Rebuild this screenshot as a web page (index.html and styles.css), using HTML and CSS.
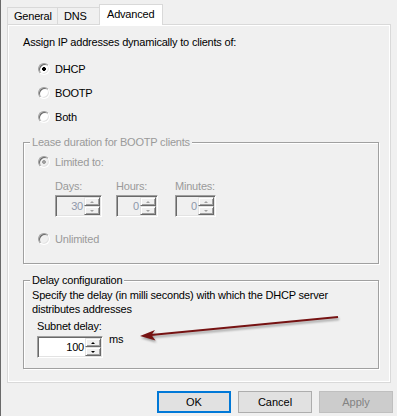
FILE: index.html
```html
<!DOCTYPE html>
<html lang="en">
<head>
    <meta charset="UTF-8">
    <title>DHCP Scope Properties - Advanced</title>
    <link rel="stylesheet" href="styles.css">
</head>
<body>
    <div class="dialog">
        <div class="tabs">
            <div class="tab general">General</div>
            <div class="tab dns">DNS</div>
            <div class="tab active">Advanced</div>
        </div>

        <div class="panel">
            <p class="intro">Assign IP addresses dynamically to clients of:</p>

            <div class="choices">
                <label class="radio checked">DHCP</label>
                <label class="radio">BOOTP</label>
                <label class="radio">Both</label>
            </div>

            <fieldset class="group lease disabled">
                <legend>Lease duration for BOOTP clients</legend>
                <label class="radio checked">Limited to:</label>
                <div class="duration">
                    <div class="field days">
                        <span class="caption">Days:</span>
                        <div class="spin">
                            <span class="value">30</span>
                            <span class="spin-buttons"><span class="up"></span><span class="down"></span></span>
                        </div>
                    </div>
                    <div class="field hours">
                        <span class="caption">Hours:</span>
                        <div class="spin">
                            <span class="value">0</span>
                            <span class="spin-buttons"><span class="up"></span><span class="down"></span></span>
                        </div>
                    </div>
                    <div class="field minutes">
                        <span class="caption">Minutes:</span>
                        <div class="spin">
                            <span class="value">0</span>
                            <span class="spin-buttons"><span class="up"></span><span class="down"></span></span>
                        </div>
                    </div>
                </div>
                <label class="radio unlimited">Unlimited</label>
            </fieldset>

            <fieldset class="group delay">
                <legend>Delay configuration</legend>
                <p class="note">Specify the delay (in milli seconds) with which the DHCP server<br>distributes addresses</p>
                <div class="field subnet">
                    <span class="caption">Subnet delay:</span>
                    <div class="spin-row">
                        <div class="spin">
                            <span class="value">100</span>
                            <span class="spin-buttons"><span class="up"></span><span class="down"></span></span>
                        </div>
                        <span class="unit">ms</span>
                    </div>
                </div>
            </fieldset>
        </div>

        <div class="buttons">
            <button class="default">OK</button>
            <button>Cancel</button>
            <button disabled>Apply</button>
        </div>
    </div>

    <!-- annotation arrow drawn over the dialog -->
    <svg class="arrow" width="397" height="416" viewBox="0 0 397 416">
        <line x1="338" y1="317" x2="151" y2="335"/>
        <path d="M140 336 L155 330 L151.5 335 L155.5 340.5 Z"/>
    </svg>
</body>
</html>
```

FILE: styles.css
```css
body {
    margin: 0;
    background-color: #f0f0f0;
    font-family: 'Liberation Sans', Arial, sans-serif;
    font-size: 11px;
    line-height: 13px;
    letter-spacing: -0.2px;
    color: #000;
}
.dialog {
    width: 397px;
    height: 416px;
    box-sizing: border-box;
    border-left: 1px solid #6a6a6a;
    padding: 4px 6px 0 6px;
}

/* tabs */
.tabs {
    display: flex;
    align-items: flex-end;
    height: 20px;
}
.tab {
    height: 17px;
    box-sizing: border-box;
    border: 1px solid #d9d9d9;
    border-right: none;
    border-bottom: none;
    padding-left: 6px;
    line-height: 16px;
    background-color: #f0f0f0;
}
.tab.general {
    width: 50px;
}
.tab.dns {
    width: 42px;
}
.tab.active {
    position: relative;
    z-index: 1;
    width: 64px;
    height: 21px;
    margin-bottom: -1px;
    padding-left: 7px;
    border-right: 1px solid #d9d9d9;
    line-height: 18px;
    background-color: #fff;
}

/* page */
.panel {
    height: 359px;
    box-sizing: border-box;
    border: 1px solid #d9d9d9;
    box-shadow: inset 0 0 0 1px #fff;
    padding: 11px 0 0 15px;
}
.intro {
    margin: 0;
}
.choices {
    display: flex;
    flex-direction: column;
    gap: 12px;
    margin-top: 14px;
    padding-left: 15px;
}

/* radio buttons */
.radio {
    display: flex;
    align-items: center;
    height: 12px;
    line-height: 12px;
}
.radio::before {
    content: '';
    width: 12px;
    height: 12px;
    box-sizing: border-box;
    margin-right: 5px;
    border: 1px solid;
    border-color: #a0a0a0 #fff #fff #a0a0a0;
    border-radius: 50%;
    box-shadow: inset 1px 1px 0 #696969, inset -1px -1px 0 #e3e3e3;
    background-color: #fff;
}
.radio.checked::before {
    background: radial-gradient(circle, #000 1.6px, #fff 2.2px);
}

/* group boxes */
.group {
    width: 356px;
    box-sizing: border-box;
    min-width: 0;
    margin: 0;
    padding: 0;
    border: 1px solid #a0a0a0;
    box-shadow: 1px 1px 0 #fff, inset 1px 1px 0 #fff;
}
.group legend {
    padding: 0 2px;
    background-color: #f0f0f0;
}
.lease {
    margin-top: 13px;
    padding: 7px 0 18px 14px;
}
.lease legend {
    margin-left: -8px;
}
.delay {
    margin-top: 10px;
    padding: 0 0 10px 8px;
}
.delay legend {
    margin-left: -2px;
}

/* disabled controls */
.disabled {
    color: #9a9a9a;
}
.disabled .radio::before {
    background-color: #f0f0f0;
}
.disabled .radio.checked::before {
    background: radial-gradient(circle, #a0a0a0 1.6px, #f0f0f0 2.2px);
}

/* duration inputs */
.duration {
    display: flex;
    margin: 12px 0 0 17px;
}
.field {
    display: flex;
    flex-direction: column;
}
.field .caption {
    height: 13px;
}
.field.days {
    width: 61px;
}
.field.hours {
    width: 59px;
}
.days .spin {
    width: 47px;
}
.hours .spin {
    width: 42px;
}
.minutes .spin {
    width: 41px;
}
.unlimited {
    margin-top: 16px;
}

/* spin boxes */
.spin {
    display: flex;
    height: 22px;
    box-sizing: border-box;
    margin-top: 2px;
    padding: 1px;
    border: 1px solid;
    border-color: #a0a0a0 #fff #fff #a0a0a0;
    box-shadow: inset 1px 1px 0 #696969, inset -1px -1px 0 #e3e3e3;
    background-color: #fff;
}
.disabled .spin {
    background-color: #f0f0f0;
    color: #8e97ab;
}
.spin .value {
    flex: 1;
    padding-right: 1px;
    line-height: 18px;
    text-align: right;
}
.spin-buttons {
    display: flex;
    flex-direction: column;
    width: 16px;
}
.spin-buttons span {
    display: flex;
    align-items: center;
    justify-content: center;
    flex: 1;
    box-sizing: border-box;
    border: 1px solid;
    border-color: #e3e3e3 #696969 #696969 #e3e3e3;
    box-shadow: inset 1px 1px 0 #fff, inset -1px -1px 0 #a0a0a0;
    background-color: #f0f0f0;
}
.spin-buttons span::after {
    content: '';
    border: 2px solid transparent;
}
.spin-buttons .up::after {
    border-top: 0;
    border-bottom-color: #000;
}
.spin-buttons .down::after {
    border-bottom: 0;
    border-top-color: #000;
}
.disabled .spin-buttons .up::after {
    border-bottom-color: #a0a0a0;
}
.disabled .spin-buttons .down::after {
    border-top-color: #a0a0a0;
}

/* delay section */
.note {
    margin: 1px 0 0;
    line-height: 14px;
}
.subnet {
    margin: 4px 0 0 5px;
}
.subnet .spin {
    width: 66px;
    margin-top: 3px;
}
.spin-row {
    display: flex;
    align-items: flex-start;
}
.unit {
    margin: 0 0 0 6px;
}

/* dialog buttons */
.buttons {
    display: flex;
    justify-content: flex-end;
    gap: 7px;
    margin: 8px -2px 0 0;
}
.buttons button {
    width: 74px;
    height: 22px;
    padding: 0;
    border: 1px solid #adadad;
    background-color: #e1e1e1;
    font: inherit;
    color: #000;
}
.buttons button.default {
    border-color: #0078d7;
    box-shadow: inset 0 0 0 1px #0078d7;
}
.buttons button:disabled {
    border-color: #bfbfbf;
    background-color: #cccccc;
    color: #838383;
}

/* annotation */
.arrow {
    position: absolute;
    top: 0;
    left: 0;
    pointer-events: none;
    filter: drop-shadow(1px 2px 1px rgba(0, 0, 0, 0.35));
}
.arrow line {
    stroke: #761313;
    stroke-width: 2.2;
}
.arrow path {
    fill: #761313;
}
```
